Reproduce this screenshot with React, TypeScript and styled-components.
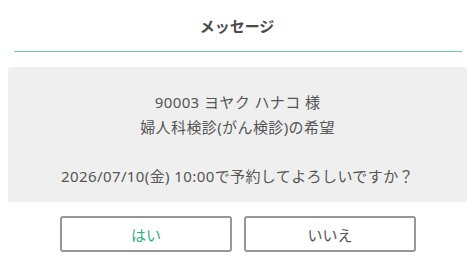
import styled, { createGlobalStyle } from "styled-components";

const GlobalStyle = createGlobalStyle`
  html, body {
    margin: 0;
    padding: 0;
    background: #ffffff;
  }
  body {
    font-family: "Noto Sans", "Noto Sans CJK JP", sans-serif;
    color: #555555;
  }
`;

const lines = [
  "90003 ヨヤク ハナコ 様",
  "婦人科検診(がん検診)の希望",
  "",
  "2026/07/10(金) 10:00で予約してよろしいですか？",
];

function App() {
  return (
    <>
      <GlobalStyle />
      <Dialog>
        <Header>
          <Title>メッセージ</Title>
        </Header>
        <Divider />
        <MessageBox>
          {lines.map((line, index) => (
            <Line key={index}>{line || "\u00a0"}</Line>
          ))}
        </MessageBox>
        <Actions>
          <Button primary>はい</Button>
          <Button>いいえ</Button>
        </Actions>
      </Dialog>
    </>
  );
}

export default App;

const Dialog = styled.div`
  width: 473px;
  height: 265px;
  display: flex;
  flex-direction: column;
  background: #ffffff;
`;

const Header = styled.div`
  height: 51px;
  display: flex;
  align-items: center;
  justify-content: center;
`;

const Title = styled.h1`
  margin: 0;
  padding-left: 1px;
  font-family: "Noto Sans CJK JP", sans-serif;
  font-size: 15px;
  font-weight: 700;
  color: #4a4a4a;
`;

const Divider = styled.div`
  height: 1px;
  margin: 0 11px 0 14px;
  background: #6ccaa8;
`;

const MessageBox = styled.div`
  margin: 15px 6px 0 8px;
  height: 135px;
  box-sizing: border-box;
  padding: 23px 0 14px;
  background: #efefef;
  border-radius: 3px;
  display: flex;
  flex-direction: column;
  align-items: center;
`;

const Line = styled.p`
  margin: 0;
  font-size: 15px;
  line-height: 24.5px;
  letter-spacing: 0.4px;
  color: #555555;
  text-align: center;
`;

const Actions = styled.div`
  margin-top: 14px;
  padding-left: 3px;
  display: flex;
  justify-content: center;
  gap: 12px;
`;

const Button = styled.button<{ primary?: boolean }>`
  width: 172px;
  height: 36px;
  box-sizing: border-box;
  background: #ffffff;
  border: 2px solid #969696;
  border-radius: 3px;
  font-family: "Noto Sans CJK JP", sans-serif;
  font-size: 15px;
  color: ${(props) => (props.primary ? "#2fae84" : "#555555")};
  padding: 0;
  cursor: pointer;
`;
